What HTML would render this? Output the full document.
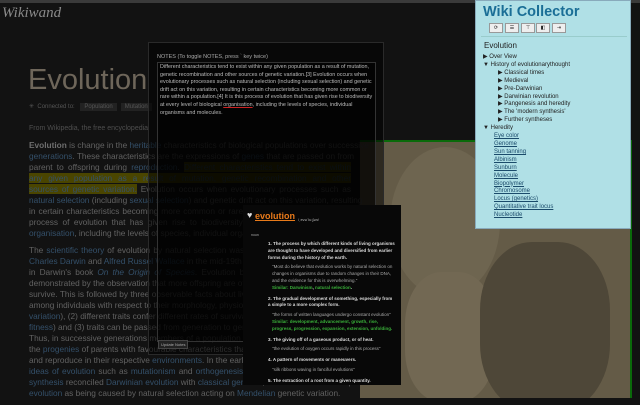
<!DOCTYPE html>
<html><head><meta charset="utf-8"><style>
*{margin:0;padding:0;box-sizing:border-box}
body{width:640px;height:400px;overflow:hidden;background:#121212;font-family:"Liberation Sans",sans-serif;position:relative}
.top{position:absolute;left:0;top:0;width:640px;height:3px;background:#3a3a3a}
.logo{position:absolute;left:2px;top:5px;font-family:"Liberation Serif",serif;font-style:italic;font-size:15px;color:#8a8a8a}
.title{position:absolute;left:28px;top:64px;font-size:29px;color:#6e665a}
.conn{position:absolute;left:29px;top:103px;font-size:6px;color:#555}
.conn span{background:#222;padding:1px 4px;margin-left:4px;color:#555}
.from{position:absolute;left:29px;top:125px;font-size:7px;color:#4e4e4e}
.art{position:absolute;left:29px;top:140px;width:322px;font-size:8.3px;line-height:11px;color:#626262}
.art section{margin-bottom:6px}
.art div{white-space:nowrap;text-align:justify;text-align-last:justify}
.art div.e{text-align-last:left}
.art a{color:#34506a}
.art b{color:#6e6e6e}
.hl{background:#4a4500;color:#34506a}
.img{position:absolute;left:360px;top:140px;width:272px;height:258px;background:#645b47;border-top:2px solid #0a6a0a;border-right:2px solid #0a6a0a;overflow:hidden}
.img .face{position:absolute;left:30px;top:5px;width:110px;height:150px;border-radius:50%;background:#6e6550}
.img .beard{position:absolute;left:45px;top:130px;width:90px;height:130px;border-radius:40%;background:#726853}
.img .body{position:absolute;left:120px;top:100px;width:130px;height:170px;border-radius:40%;background:#4e4738}
.notes{position:absolute;left:148px;top:42px;width:236px;height:313px;background:rgba(0,0,0,0.55);border:1px solid #2a2a2a}
.notes .h{position:absolute;left:8px;top:11px;font-size:5.5px;color:#aaa}
.notes .ta{position:absolute;left:8px;top:19px;width:219px;height:280px;border:1px solid #333;background:rgba(0,0,0,0.6);font-size:5.4px;line-height:7.6px;color:#bbb;padding:1px 2px}
.notes .btn{position:absolute;left:9px;top:297px;font-size:4px;color:#aaa;background:#222;border:1px solid #444;padding:1px 2px}
.dict{position:absolute;left:243px;top:205px;width:158px;height:180px;background:#080808;color:#ddd;font-size:4.5px;line-height:6.8px}
.dict .hw{position:absolute;left:12px;top:8px;font-size:9px;color:#e87a1a;font-weight:bold;text-decoration:underline}
.dict .ph{position:absolute;left:55px;top:12px;font-size:4px;color:#bbb}
.dict .hrt{position:absolute;left:4px;top:7px;font-size:9px;color:#ddd}
.dict .n{position:absolute;left:8px;top:27px;font-size:3.5px;color:#aaa}
.dict ol{position:absolute;left:25px;top:36px;width:128px;list-style:none}
.dict li{margin-bottom:4px;font-weight:bold}
.dict .q{color:#aaa;font-weight:normal;margin:3px 0 0 4px}
.dict .s{color:#3ab03a;margin-left:4px}
.dict .s i{color:#ddd;font-style:normal}
.wc{position:absolute;left:475px;top:0;width:156px;height:229px;background:#b0e0e6;border:1px solid #8ab;font-size:6px;color:#222}
.wc .t{position:absolute;left:7px;top:3px;font-size:14.5px;font-weight:bold;color:#1a6e96}
.wc .bt{position:absolute;top:22px;width:14px;height:10px;background:#eee;border:1px solid #999;font-size:5px;text-align:center;line-height:8px}
.wc .hr{position:absolute;left:5px;top:35px;width:146px;border-top:1px solid #9cc}
.wc .ev{position:absolute;left:8px;top:40px;font-size:8px;color:#222}
.wc ul{position:absolute;left:7px;top:53px;list-style:none;line-height:7.9px}
.wc li.i{padding-left:15px}
.wc li.l{padding-left:11px;color:#1a4a6a;text-decoration:underline}
</style></head><body>
<div class="top"></div>
<div class="logo">Wikiwand</div>
<div class="title">Evolution</div>
<div class="conn">✳ &nbsp;Connected to: <span>Population</span><span>Mutation</span></div>
<div class="from">From Wikipedia, the free encyclopedia</div>
<div class="img"><div class="face"></div><div class="beard"></div><div class="body"></div></div>
<div class="art">
<section>
<div><b>Evolution</b> is change in the <a>heritable</a> characteristics of biological populations over successive</div>
<div><a>generations</a>. These characteristics are the expressions of <a>genes</a> that are passed on from</div>
<div>parent to offspring during <a>reproduction</a>. <span class="hl">Different characteristics tend to exist within</span></div>
<div><span class="hl">any given population as a result of mutation, genetic recombination and other</span></div>
<div><span class="hl">sources of genetic variation.</span> Evolution occurs when evolutionary processes such as</div>
<div><a>natural selection</a> (including <a>sexual selection</a>) and genetic drift act on this variation, resulting</div>
<div>in certain characteristics becoming more common or rare within a population. It is this</div>
<div>process of evolution that has given rise to biodiversity at every level of biological</div>
<div class="e"><a>organisation</a>, including the levels of species, individual organisms and molecules.</div>
</section>
<section>
<div>The <a>scientific theory</a> of evolution by natural selection was conceived independently by</div>
<div><a>Charles Darwin</a> and <a>Alfred Russel Wallace</a> in the mid-19th century and was set out in detail</div>
<div>in Darwin's book <a><i>On the Origin of Species</i></a>. Evolution by natural selection was first</div>
<div>demonstrated by the observation that more offspring are often produced than can possibly</div>
<div>survive. This is followed by three observable facts about living organisms: (1) traits vary</div>
<div>among individuals with respect to their morphology, physiology and behaviour (<a>phenotypic</a></div>
<div><a>variation</a>), (2) different traits confer different rates of survival and reproduction (differential</div>
<div><a>fitness</a>) and (3) traits can be passed from generation to generation (heritability of fitness).</div>
<div>Thus, in successive generations members of a population are more likely to be replaced by</div>
<div>the <a>progenies</a> of parents with favourable characteristics that have enabled them to survive</div>
<div>and reproduce in their respective <a>environments</a>. In the early 20th century, other competing</div>
<div><a>ideas of evolution</a> such as <a>mutationism</a> and <a>orthogenesis</a> were refuted as the modern</div>
<div><a>synthesis</a> reconciled <a>Darwinian evolution</a> with <a>classical genetics</a>, which established adaptive</div>
<div class="e"><a>evolution</a> as being caused by natural selection acting on <a>Mendelian</a> genetic variation.</div>
</section>
</div>
<div class="notes"><div class="h">NOTES (To toggle NOTES, press ` key twice)</div>
<div class="ta">Different characteristics tend to exist within any given population as a result of mutation, genetic recombination and other sources of genetic variation.[3] Evolution occurs when evolutionary processes such as natural selection (including sexual selection) and genetic drift act on this variation, resulting in certain characteristics becoming more common or rare within a population.[4] It is this process of evolution that has given rise to biodiversity at every level of biological <u style="text-decoration-color:#c22">organisation</u>, including the levels of species, individual organisms and molecules.</div>
<div class="btn">Update Notes</div></div>
<div class="dict"><div class="hrt">♥</div><div class="hw">evolution</div><div class="ph">/ˌevəˈluːʃən/</div><div class="n">noun</div>
<ol>
<li>1. The process by which different kinds of living organisms are thought to have developed and diversified from earlier forms during the history of the earth.<div class="q">"Most do believe that evolution works by natural selection on changes in organisms due to random changes in their DNA, and the evidence for this is overwhelming."</div><div class="s">Similar: Darwinism<i>,</i> natural selection<i>.</i></div></li>
<li>2. The gradual development of something, especially from a simple to a more complex form.<div class="q">"the forms of written languages undergo constant evolution"</div><div class="s">Similar: development, advancement, growth, rise, progress, progression, expansion, extension, unfolding.</div></li>
<li>3. The giving off of a gaseous product, or of heat.<div class="q">"the evolution of oxygen occurs rapidly in this process"</div></li>
<li>4. A pattern of movements or maneuvers.<div class="q">"silk ribbons waving in fanciful evolutions"</div></li>
<li>5. The extraction of a root from a given quantity.</li>
</ol></div>
<div class="wc"><div class="t">Wiki Collector</div>
<div class="bt" style="left:13px">⟳</div><div class="bt" style="left:29px">☰</div><div class="bt" style="left:45px">⊤</div><div class="bt" style="left:60px">◧</div><div class="bt" style="left:76px">⇥</div>
<div class="hr"></div><div class="ev">Evolution</div>
<ul>
<li>▶ Over View</li>
<li>▼ History of evolutionarythought</li>
<li class="i">▶ Classical times</li><li class="i">▶ Medieval</li><li class="i">▶ Pre-Darwinian</li><li class="i">▶ Darwinian revolution</li><li class="i">▶ Pangenesis and heredity</li><li class="i">▶ The 'modern synthesis'</li><li class="i">▶ Further syntheses</li>
<li>▼ Heredity</li>
<li class="l">Eye color</li><li class="l">Genome</li><li class="l">Sun tanning</li><li class="l">Albinism</li><li class="l">Sunburn</li><li class="l">Molecule</li><li class="l">Biopolymer</li><li class="l">Chromosome</li><li class="l">Locus (genetics)</li><li class="l">Quantitative trait locus</li><li class="l">Nucleotide</li>
</ul></div>
</body></html>
